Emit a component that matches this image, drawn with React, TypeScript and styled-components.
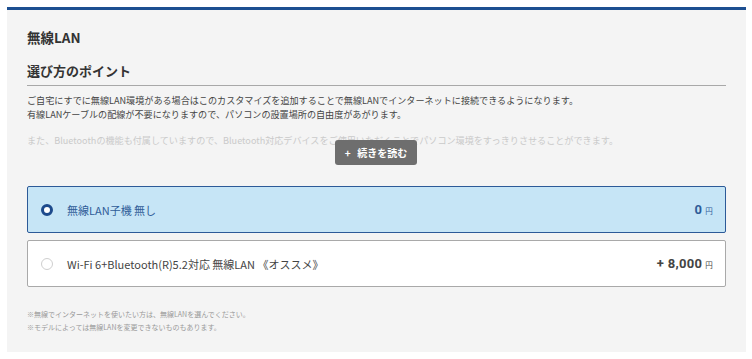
import styled, { createGlobalStyle } from "styled-components"

const GlobalStyle = createGlobalStyle`
  body {
    margin: 0;
    background: #ffffff;
    font-family: "Noto Sans CJK JP", "Noto Sans", sans-serif;
  }
`

type Option = {
  label: string
  price: string
  selected: boolean
}

const options: Option[] = [
  { label: "無線LAN子機 無し", price: "0", selected: true },
  { label: "Wi-Fi 6+Bluetooth(R)5.2対応 無線LAN 《オススメ》", price: "+ 8,000", selected: false },
]

export default function App() {
  return (
    <>
      <GlobalStyle />
      <Page>
        <Panel>
          <Title>無線LAN</Title>
          <SubTitle>選び方のポイント</SubTitle>
          <Description>
            <p>ご自宅にすでに無線LAN環境がある場合はこのカスタマイズを追加することで無線LANでインターネットに接続できるようになります。</p>
            <p>有線LANケーブルの配線が不要になりますので、パソコンの設置場所の自由度があがります。</p>
            <FadedLine>また、Bluetoothの機能も付属していますので、Bluetooth対応デバイスをご使用いただくことでパソコン環境をすっきりさせることができます。</FadedLine>
            <MoreButton>+&nbsp;&nbsp;&nbsp;続きを読む</MoreButton>
          </Description>
          <OptionList>
            {options.map((o) => (
              <OptionRow key={o.label} selected={o.selected}>
                <Radio selected={o.selected} />
                <OptionLabel selected={o.selected}>{o.label}</OptionLabel>
                <Price selected={o.selected}>
                  {o.price}<Yen>円</Yen>
                </Price>
              </OptionRow>
            ))}
          </OptionList>
          <Notes>
            <p>※無線でインターネットを使いたい方は、無線LANを選んでください。</p>
            <p>※モデルによっては無線LANを変更できないものもあります。</p>
          </Notes>
        </Panel>
      </Page>
    </>
  )
}

const Page = styled.div`
  width: 752px;
  height: 359px;
  padding: 7px 6px 0 7px;
  box-sizing: border-box;
`

const Panel = styled.div`
  background: #f4f4f4;
  border-top: 3px solid #1d4f91;
  padding: 0 20px 0 20px;
  height: 345px;
  box-sizing: border-box;
`

const Title = styled.h2`
  margin: 0;
  padding-top: 18px;
  font-size: 13.5px;
  font-weight: 700;
  color: #333;
  line-height: 18px;
`

const SubTitle = styled.h3`
  margin: 16px 0 0;
  font-size: 13px;
  font-weight: 700;
  color: #333;
  line-height: 18px;
  padding-bottom: 5px;
  border-bottom: 1px solid #a8a8a8;
`

const Description = styled.div`
  position: relative;
  padding-top: 7px;
  font-size: 9.1px;
  color: #444;
  line-height: 14px;
  height: 82px;

  p {
    margin: 0;
    white-space: nowrap;
  }
`

const FadedLine = styled.p`
  && {
    margin-top: 12px;
  }
  color: #cacaca;
`

const MoreButton = styled.div`
  position: absolute;
  left: 308px;
  top: 54px;
  width: 82px;
  height: 25px;
  border-radius: 3px;
  background: #6e6e6e;
  color: #fff;
  font-size: 10px;
  font-weight: 700;
  display: flex;
  align-items: center;
  justify-content: center;
`

const OptionList = styled.div`
  display: flex;
  flex-direction: column;
  gap: 7px;
  margin-top: 11px;
`

const OptionRow = styled.div<{ selected: boolean }>`
  display: flex;
  align-items: center;
  height: 47px;
  box-sizing: border-box;
  padding: 0 12px 0 12px;
  border: 1px solid ${(p) => (p.selected ? "#2c5a98" : "#a9a9a9")};
  border-radius: 2px;
  background: ${(p) => (p.selected ? "#c6e5f6" : "#ffffff")};
`

const Radio = styled.span<{ selected: boolean }>`
  width: 12px;
  height: 12px;
  border-radius: 50%;
  box-sizing: border-box;
  border: ${(p) => (p.selected ? "3px solid #1d4a8c" : "1px solid #cfcfcf")};
  background: #fff;
  margin-right: 14px;
  margin-left: 1px;
`

const OptionLabel = styled.span<{ selected: boolean }>`
  flex: 1;
  font-size: 11px;
  color: ${(p) => (p.selected ? "#2f5c98" : "#444")};
`

const Price = styled.span<{ selected: boolean }>`
  font-family: "Roboto", "Liberation Sans", sans-serif;
  font-size: 13px;
  font-weight: 700;
  letter-spacing: 0.3px;
  color: ${(p) => (p.selected ? "#2f5c98" : "#444")};
`

const Yen = styled.span`
  font-family: "Noto Sans CJK JP", sans-serif;
  font-size: 7.5px;
  font-weight: 400;
  margin-left: 3px;
`

const Notes = styled.div`
  margin-top: 21px;
  font-size: 7px;
  color: #9a9a9a;
  line-height: 13px;

  p {
    margin: 0;
  }
`
